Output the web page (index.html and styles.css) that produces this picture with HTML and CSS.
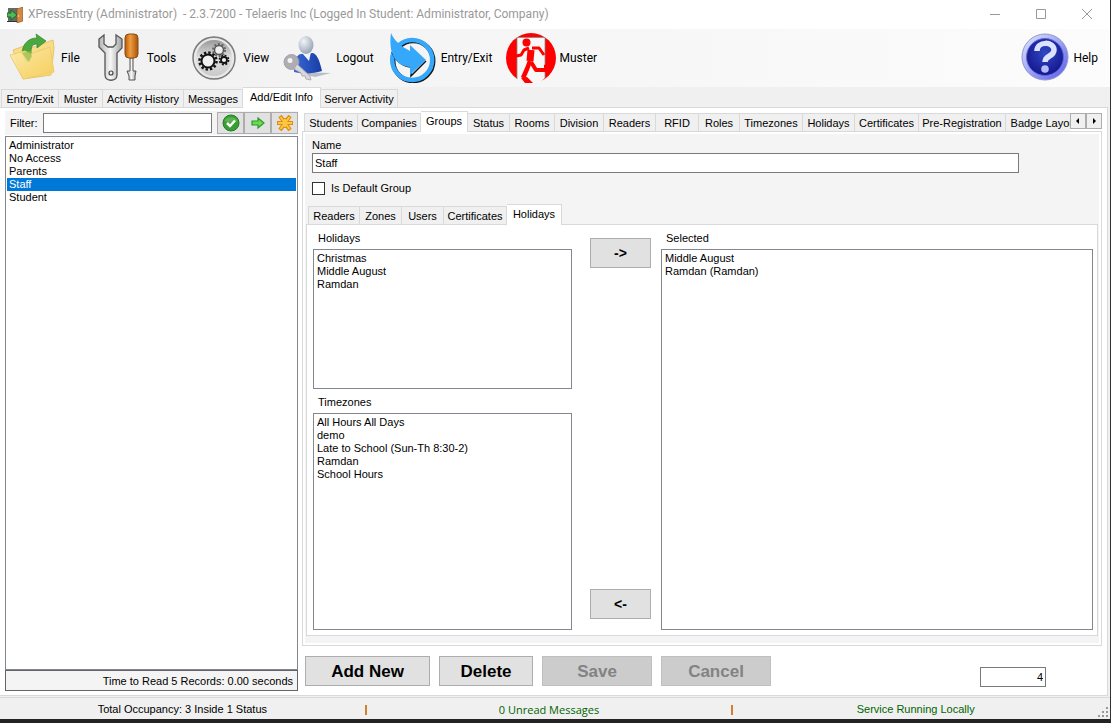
FILE: index.html
```html
<!DOCTYPE html>
<html lang="en">
<head>
    <meta charset="UTF-8">
    <meta name="viewport" content="width=device-width, initial-scale=1.0">
    <title>XPressEntry (Administrator)</title>
    <link rel="stylesheet" href="styles.css">
</head>
<body>

    <div class="window">

        <header class="title-bar">
            <svg class="app-icon" viewBox="0 0 16 16">
                <rect x="1" y="1" width="10" height="13" fill="#6a6a62"/>
                <path d="M0 6h4V3l6 5-6 5v-3H0z" fill="#4cbc58" stroke="#1c6a2c"/>
                <path d="M10 2l6-2v14l-6 2z" fill="#d08a48" stroke="#8a4a1c" stroke-width=".6"/>
                <path d="M0 14.500h10" stroke="#333"/>
                <circle cx="11.500" cy="9" r=".8" fill="#ffe28a"/>
            </svg>
            <h1 class="window-title">XPressEntry (Administrator) &nbsp;- 2.3.7200 - Telaeris Inc (Logged In Student: Administrator, Company)</h1>
            <div class="window-controls">
                <button class="control-btn" aria-label="Minimize">
                    <svg viewBox="0 0 12 12"><path d="M1 5.500h10"/></svg>
                </button>
                <button class="control-btn" aria-label="Maximize">
                    <svg viewBox="0 0 12 12"><path d="M1.500 .5h9v9h-9z"/></svg>
                </button>
                <button class="control-btn" aria-label="Close">
                    <svg viewBox="0 0 12 12"><path d="M1 0l10 10M11 0L1 10"/></svg>
                </button>
            </div>
        </header>

        <nav class="toolbar">
            <button class="tool-btn">
                <svg class="tool-icon" viewBox="0 0 50 50">
                    <defs>
                        <linearGradient id="folder" x1="0" y1="0" x2="1" y2="1">
                            <stop offset="0" stop-color="#fdeeb0"/>
                            <stop offset="1" stop-color="#f5ca52"/>
                        </linearGradient>
                    </defs>
                    <path d="M5 17l14-5 4 3 22-8 1 8-3 27-28 4z" fill="#f8dc86" stroke="#e6c468"/>
                    <path d="M14 20C15 9 22 5 29 5l-1-4 10 7-9 7v-4c-5 0-6 3-6 9l-4 9z" fill="#4aa83c" stroke="#2f8030" stroke-width=".7"/>
                    <path d="M2 22l15-4 5 3 20-7 4 25-31 7z" fill="url(#folder)" fill-opacity=".86" stroke="#efcd6c"/>
                    <path d="M14 20l8-2 2-1c-1 4 0 6 0 6l-3 6z" fill="#94ba48" opacity=".65"/>
                </svg>
                <span>File</span>
            </button>
            <button class="tool-btn">
                <svg class="tool-icon" viewBox="0 0 50 50">
                    <defs>
                        <linearGradient id="steel">
                            <stop offset="0" stop-color="#b4b4b4"/>
                            <stop offset=".5" stop-color="#f6f6f6"/>
                            <stop offset="1" stop-color="#a2a2a2"/>
                        </linearGradient>
                        <linearGradient id="handle">
                            <stop offset="0" stop-color="#b45a0c"/>
                            <stop offset=".4" stop-color="#f09c3e"/>
                            <stop offset="1" stop-color="#a8540c"/>
                        </linearGradient>
                    </defs>
                    <path d="M10 2L5 6v8l6 6v22c0 7 12 7 12 0V20l5-5V6l-6-4v9l-3 3h-5l-4-3z" fill="url(#steel)" stroke="#555" stroke-width="1.300"/>
                    <circle cx="17" cy="40" r="2" fill="#eee" stroke="#444" stroke-width="1.200"/>
                    <path d="M36 25h3v13h3l-1 5v4h-6v-4l-2-5h3z" fill="url(#steel)" stroke="#555"/>
                    <path d="M31 5q0-4 4-4h5q4 0 4 4v16q0 4-4 4h-5q-4 0-4-4z" fill="url(#handle)" stroke="#8a4a12"/>
                </svg>
                <span>Tools</span>
            </button>
            <button class="tool-btn">
                <svg class="tool-icon" viewBox="0 0 50 50">
                    <defs>
                        <linearGradient id="disc" x1="0" y1="0" x2="0" y2="1">
                            <stop offset="0" stop-color="#8c8c8c"/>
                            <stop offset=".5" stop-color="#e2e2e2"/>
                            <stop offset="1" stop-color="#c4c4c4"/>
                        </linearGradient>
                    </defs>
                    <circle cx="24" cy="25" r="21" fill="url(#disc)" stroke="#7c7c7c" stroke-width="1.500"/>
                    <circle cx="24" cy="25" r="19" fill="none" stroke="#e9e9e9" stroke-width="2"/>
                    <circle cx="18" cy="28" r="8.500" fill="none" stroke="#111" stroke-width="2.500" stroke-dasharray="2.400 2.050"/>
                    <circle cx="18" cy="28" r="6.500" fill="#f1f1f1" stroke="#111" stroke-width="2"/>
                    <circle cx="29" cy="17" r="6" fill="none" stroke="#666" stroke-width="2" stroke-dasharray="2 1.770"/>
                    <circle cx="29" cy="17" r="4.500" fill="#eee" stroke="#555" stroke-width="1.500"/>
                    <circle cx="34" cy="27" r="4.600" fill="none" stroke="#111" stroke-width="1.600" stroke-dasharray="2 1.610"/>
                    <circle cx="34" cy="27" r="3" fill="#eee" stroke="#111" stroke-width="1.800"/>
                </svg>
                <span>View</span>
            </button>
            <button class="tool-btn">
                <svg class="tool-icon" viewBox="0 0 50 50">
                    <defs>
                        <radialGradient id="head" cx=".35" cy=".3" r=".8">
                            <stop offset="0" stop-color="#f2f5f9"/>
                            <stop offset="1" stop-color="#8f9cad"/>
                        </radialGradient>
                        <linearGradient id="coat">
                            <stop offset="0" stop-color="#3868d4"/>
                            <stop offset="1" stop-color="#173ca6"/>
                        </linearGradient>
                    </defs>
                    <path d="M12 39l36 1-16 4z" fill="#b9bdc6"/>
                    <path d="M11 37c0-9 2-15 7-16l12-1c5 2 7 10 9 18-9 3-20 3-28 1z" fill="url(#coat)"/>
                    <path d="M19 20l9-1-2 9z" fill="#f1f4fa"/>
                    <ellipse cx="23" cy="12" rx="7.500" ry="9" fill="url(#head)"/>
                    <circle cx="8.500" cy="29" r="7.500" fill="#adadb3" stroke="#98989e" stroke-width=".8"/>
                    <circle cx="7" cy="27.500" r="2.500" fill="#f4f4f4"/>
                    <path d="M14 31l13 12 1 4-5-1-1-3-3 0-1-3-7-4z" fill="#d8d8dc" stroke="#a2a2a8" stroke-width=".8"/>
                </svg>
                <span>Logout</span>
            </button>
            <button class="tool-btn">
                <svg class="tool-icon" viewBox="0 0 50 50">
                    <circle cx="25.200" cy="28" r="20" fill="none" stroke="#111" stroke-width="4.500"/>
                    <circle cx="24.200" cy="27" r="20" fill="none" stroke="#35a8fb" stroke-width="4.500"/>
                    <path d="M4 19c3 8 10 14 19 15v9l15-15" fill="none" stroke="#111" stroke-width="1.500"/>
                    <path d="M3 0c3 7 8 11 12 14l7 4v-6l16 15-16 15v-8C8 33 0 21 3 0z" fill="#35a8fb"/>
                </svg>
                <span>Entry/Exit</span>
            </button>
            <button class="tool-btn">
                <svg class="tool-icon" viewBox="0 0 50 50">
                    <circle cx="25" cy="25" r="25" fill="#f00"/>
                    <path d="M11 4.500h28V45l-6 5H15l-4-4z" fill="#f7f7f7"/>
                    <path d="M11 4.500h28V45M11 4.500V46" fill="none" stroke="#888" stroke-width=".8"/>
                    <circle cx="20.500" cy="9.500" r="4" fill="#f00"/>
                    <g fill="none" stroke="#f00" stroke-linejoin="round">
                        <path d="M25 17l-1 11" stroke-width="7"/>
                        <path d="M23 15l-5 2-3 5-5 1M26 15h7l5 7" stroke-width="3"/>
                        <path d="M25 29l5 8h12" stroke-width="4"/>
                        <path d="M24 28l-3 8-4 9" stroke-width="4.500"/>
                    </g>
                    <path d="M38 32l3-1 2 7h-5z" fill="#f00"/>
                    <path d="M15 45l6-1 6 6h-8z" fill="#f00"/>
                </svg>
                <span>Muster</span>
            </button>
            <button class="tool-btn help-btn">
                <svg class="tool-icon" viewBox="0 0 50 50">
                    <defs>
                        <linearGradient id="ring" x1="0" y1="0" x2="1" y2="1">
                            <stop offset="0" stop-color="#e4ebff"/>
                            <stop offset="1" stop-color="#5658ee"/>
                        </linearGradient>
                        <radialGradient id="ball" cx=".5" cy=".4" r=".6">
                            <stop offset="0" stop-color="#3048c4"/>
                            <stop offset="1" stop-color="#15168c"/>
                        </radialGradient>
                    </defs>
                    <circle cx="25" cy="24" r="23" fill="url(#ring)" stroke="#9098c8"/>
                    <circle cx="25" cy="24" r="18.500" fill="url(#ball)" stroke="#5a6ad8"/>
                    <path d="M17 18c0-10 17-10 17-1 0 7-9 5-9 12" fill="none" stroke="#dbe2ff" stroke-width="5.500"/>
                    <circle cx="25" cy="36" r="3.800" fill="#b4bcfa"/>
                </svg>
                <span>Help</span>
            </button>
        </nav>

        <div class="tabs main-tabs" role="tablist">
            <button class="tab" role="tab">Entry/Exit</button>
            <button class="tab" role="tab">Muster</button>
            <button class="tab" role="tab">Activity History</button>
            <button class="tab" role="tab">Messages</button>
            <button class="tab active" role="tab" aria-selected="true">Add/Edit Info</button>
            <button class="tab" role="tab">Server Activity</button>
        </div>

        <main class="workspace">

            <aside class="sidebar">
                <div class="filter-row">
                    <label for="filter">Filter:</label>
                    <input type="text" id="filter" class="text-box">
                    <div class="filter-buttons">
                        <button class="icon-btn" aria-label="Apply filter">
                            <svg viewBox="0 0 18 18">
                                <circle cx="9" cy="9" r="8" fill="#38a032" stroke="#267a28"/>
                                <path d="M2.500 7a7 6 0 0 1 13 0q-6 3-13 0z" fill="#7cc870" opacity=".5"/>
                                <path d="M5 9l3 3L13 6.500" fill="none" stroke="#fff" stroke-width="2.500"/>
                            </svg>
                        </button>
                        <button class="icon-btn" aria-label="Next">
                            <svg viewBox="0 0 18 18">
                                <path d="M3 7h6V4l6 5-6 5v-3H3z" fill="#6cdc4c" stroke="#299a2b" stroke-width="1.200"/>
                            </svg>
                        </button>
                        <button class="icon-btn" aria-label="Clear filter">
                            <svg viewBox="0 0 18 18">
                                <path d="M9 4v10M1 9h16M4 2l10 14M14 2L4 16" fill="none" stroke="#dc8c14" stroke-width="4"/>
                                <path d="M9 5v8M2 9h14M4.500 3l9 12M13.500 3l-9 12" fill="none" stroke="#ffc83c" stroke-width="2"/>
                            </svg>
                        </button>
                    </div>
                </div>
                <select class="list-box group-list" size="5" aria-label="Groups">
                    <option>Administrator</option>
                    <option>No Access</option>
                    <option>Parents</option>
                    <option selected>Staff</option>
                    <option>Student</option>
                </select>
                <div class="read-time">Time to Read 5 Records: 0.00 seconds</div>
            </aside>

            <section class="details">
                <div class="tabs-row">
                    <div class="tabs info-tabs" role="tablist">
                        <button class="tab" role="tab">Students</button>
                        <button class="tab" role="tab">Companies</button>
                        <button class="tab active" role="tab" aria-selected="true">Groups</button>
                        <button class="tab" role="tab">Status</button>
                        <button class="tab" role="tab">Rooms</button>
                        <button class="tab" role="tab">Division</button>
                        <button class="tab" role="tab">Readers</button>
                        <button class="tab" role="tab">RFID</button>
                        <button class="tab" role="tab">Roles</button>
                        <button class="tab" role="tab">Timezones</button>
                        <button class="tab" role="tab">Holidays</button>
                        <button class="tab" role="tab">Certificates</button>
                        <button class="tab" role="tab">Pre-Registration</button>
                        <button class="tab" role="tab">Badge Layout</button>
                    </div>
                    <div class="tab-scroll">
                        <button class="scroll-btn" aria-label="Scroll left"><svg viewBox="0 0 8 8"><path d="M5 1v6L2 4z"/></svg></button>
                        <button class="scroll-btn" aria-label="Scroll right"><svg viewBox="0 0 8 8"><path d="M3 1v6l3-3z"/></svg></button>
                    </div>
                </div>

                <div class="group-page">
                    <div class="group-fields">
                        <label for="group-name">Name</label>
                        <input type="text" id="group-name" class="text-box name-box" value="Staff">
                        <div class="check-row">
                            <input type="checkbox" id="default-group" class="check-box">
                            <label for="default-group">Is Default Group</label>
                        </div>
                    </div>

                    <div class="tabs group-tabs" role="tablist">
                        <button class="tab" role="tab">Readers</button>
                        <button class="tab" role="tab">Zones</button>
                        <button class="tab" role="tab">Users</button>
                        <button class="tab" role="tab">Certificates</button>
                        <button class="tab active" role="tab" aria-selected="true">Holidays</button>
                    </div>

                    <div class="holiday-page">
                        <div class="source-lists">
                            <label for="holidays">Holidays</label>
                            <select class="list-box holiday-list" id="holidays" size="3">
                                <option>Christmas</option>
                                <option>Middle August</option>
                                <option>Ramdan</option>
                            </select>
                            <label for="timezones">Timezones</label>
                            <select class="list-box timezone-list" id="timezones" size="5">
                                <option>All Hours All Days</option>
                                <option>demo</option>
                                <option>Late to School (Sun-Th 8:30-2)</option>
                                <option>Ramdan</option>
                                <option>School Hours</option>
                            </select>
                        </div>
                        <div class="move-buttons">
                            <button class="btn move-btn">-&gt;</button>
                            <button class="btn move-btn">&lt;-</button>
                        </div>
                        <div class="selected-list">
                            <label for="selected">Selected</label>
                            <select class="list-box" id="selected" size="2">
                                <option>Middle August</option>
                                <option>Ramdan (Ramdan)</option>
                            </select>
                        </div>
                    </div>
                </div>

                <div class="actions">
                    <button class="btn add-btn">Add New</button>
                    <button class="btn delete-btn">Delete</button>
                    <button class="btn" disabled>Save</button>
                    <button class="btn" disabled>Cancel</button>
                    <input type="text" class="text-box id-box" value="4" aria-label="Group ID">
                </div>
            </section>

        </main>

        <footer class="status-bar">
            <span class="status-cell">Total Occupancy: 3 Inside 1 Status</span>
            <span class="divider"></span>
            <span class="status-cell good unread">0 Unread Messages</span>
            <span class="divider"></span>
            <span class="status-cell good">Service Running Locally</span>
            <svg class="grip" viewBox="0 0 12 12">
                <path d="M8 0h2v2H8zM4 4h2v2H4zM8 4h2v2H8zM0 8h2v2H0zM4 8h2v2H4zM8 8h2v2H8z" fill="#999"/>
            </svg>
        </footer>

    </div>

</body>
</html>
```
FILE: styles.css
```css
* {
    margin: 0;
    padding: 0;
    box-sizing: border-box;
}

body {
    background-color: #232323;
    color: black;
    font-family: "Liberation Sans", Arial, sans-serif;
    font-size: 11px;
    line-height: 13px;
    overflow: hidden;
}

button, input, select {
    font: inherit;
    color: inherit;
    border-radius: 0;
    outline: none;
}

svg {
    display: block;
}

.window {
    height: 100vh;
    display: flex;
    flex-direction: column;
    background-color: #f0f0f0;
    border-right: 1px solid #333;
    border-bottom: 4px solid #232323;
}

/* title bar */
.title-bar {
    display: flex;
    align-items: center;
    height: 29px;
    flex-shrink: 0;
    padding-left: 7px;
    background-color: white;
}

.app-icon {
    width: 16px;
    height: 16px;
}

.window-title {
    margin-left: 5px;
    font-family: Roboto, "Open Sans", sans-serif;
    font-size: 12px;
    font-weight: normal;
    color: #999;
    white-space: nowrap;
}

.window-controls {
    display: flex;
    margin-left: auto;
}

.control-btn {
    width: 46px;
    height: 27px;
    display: flex;
    align-items: center;
    justify-content: center;
    background: none;
    border: none;
}

.control-btn svg {
    width: 12px;
    height: 12px;
    fill: none;
    stroke: #999;
}

/* toolbar */
.toolbar {
    display: flex;
    align-items: center;
    gap: 14px;
    height: 58px;
    flex-shrink: 0;
    padding: 0 12px 0 8px;
    background: linear-gradient(to right, #f0f0f0, #fcfcfc);
}

.tool-btn {
    display: flex;
    align-items: center;
    gap: 3px;
    background: none;
    border: none;
    font-family: Roboto, "Open Sans", sans-serif;
    font-size: 12px;
}

.tool-icon {
    width: 50px;
    height: 50px;
}

.help-btn {
    margin-left: auto;
}

/* tabs */
.tabs {
    display: grid;
    grid-auto-flow: column;
    justify-content: start;
    align-items: end;
    height: 20px;
    position: relative;
    z-index: 1;
}

.tab {
    height: 18px;
    padding-top: 2px;
    background-color: #f0f0f0;
    border: 1px solid #d9d9d9;
    border-left: none;
    border-bottom: none;
    white-space: nowrap;
}

.tab:first-child {
    border-left: 1px solid #d9d9d9;
}

.tab.active {
    height: 21px;
    margin-bottom: -1px;
    padding-bottom: 3px;
    background-color: white;
}

.main-tabs {
    grid-template-columns: 58px 44px 81px 59px 78px 77px;
    flex-shrink: 0;
    padding-left: 1px;
}

.info-tabs {
    flex: 1;
    min-width: 0;
    overflow-x: clip;
    grid-template-columns: 54px 63px 47px 42px 45px 49px 52px 43px 41px 63px 52px 64px 87px 78px;
}

.group-tabs {
    grid-template-columns: 52px 42px 42px 63px 55px;
    padding-left: 2px;
}

/* content */
.workspace {
    flex: 1;
    display: flex;
    gap: 4px;
    min-height: 0;
    margin-right: 2px;
    padding: 3px 5px;
    background-color: white;
    border: 1px solid #d9d9d9;
    border-left: none;
}

.sidebar {
    width: 293px;
    flex-shrink: 0;
    display: flex;
    flex-direction: column;
    padding-bottom: 1px;
}

.filter-row {
    display: flex;
    align-items: center;
    height: 24px;
    padding-left: 5px;
    background-color: #f4f4f4;
}

.filter-row label {
    width: 33px;
}

.text-box {
    height: 20px;
    padding: 0 2px;
    background-color: white;
    border: 1px solid #7a7a7a;
}

.filter-row .text-box {
    flex: 1;
    min-width: 0;
}

.filter-buttons {
    display: flex;
    margin-left: 5px;
}

.icon-btn {
    width: 27px;
    height: 22px;
    display: flex;
    align-items: center;
    justify-content: center;
    background-color: #e1e1e1;
    border: 1px solid #adadad;
}

.icon-btn svg {
    width: 18px;
    height: 18px;
}

.list-box {
    display: block;
    width: 100%;
    padding: 2px 1px;
    background-color: white;
    border: 1px solid #828790;
    overflow: hidden;
}

.list-box option {
    height: 13px;
    min-height: 13px;
    padding: 0 2px;
    line-height: 13px;
}

.list-box option:checked {
    background: #0078d7 linear-gradient(#0078d7, #0078d7);
    -webkit-text-fill-color: white;
}

.group-list {
    flex: 1;
    margin-top: 1px;
}

.read-time {
    height: 21px;
    padding: 4px 4px 0;
    background-color: #f4f4f4;
    border: 1px solid #646464;
    text-align: right;
}

.details {
    flex: 1;
    min-width: 0;
    display: flex;
    flex-direction: column;
}

.tabs-row {
    display: flex;
    padding-left: 2px;
}

.tab-scroll {
    display: flex;
    margin-top: 2px;
}

.scroll-btn {
    width: 16px;
    height: 16px;
    display: flex;
    align-items: center;
    justify-content: center;
    background-color: #f0f0f0;
    border: 1px solid #adadad;
}

.scroll-btn svg {
    width: 8px;
    height: 8px;
}

.group-page {
    flex: 1;
    display: flex;
    flex-direction: column;
    padding: 7px 3px 9px;
    background-color: #f4f4f4;
    border: 1px solid #d9d9d9;
    box-shadow: inset 0 0 0 2px white;
}

.group-fields {
    height: 65px;
    padding-left: 6px;
}

.group-fields label {
    display: block;
}

.name-box {
    display: block;
    width: 90%;
    margin-top: 1px;
}

.check-row {
    display: flex;
    align-items: center;
    gap: 6px;
    margin-top: 9px;
}

.check-box {
    appearance: none;
    width: 13px;
    height: 13px;
    background-color: white;
    border: 1px solid #333;
}

.check-box:checked {
    background-color: #333;
    box-shadow: inset 0 0 0 2px white;
}

.holiday-page {
    flex: 1;
    display: flex;
    padding: 7px 4px 5px 6px;
    background-color: white;
    border: 1px solid #d9d9d9;
}

.holiday-page label {
    display: block;
    height: 17px;
    padding-left: 5px;
}

.source-lists {
    width: 259px;
    display: flex;
    flex-direction: column;
}

.holiday-list {
    height: 140px;
    margin-bottom: 7px;
}

.timezone-list {
    flex: 1;
}

.move-buttons {
    display: flex;
    flex-direction: column;
    justify-content: space-between;
    padding: 6px 10px 11px 18px;
}

.btn {
    width: 110px;
    height: 30px;
    background-color: #e1e1e1;
    border: 1px solid #adadad;
    font-size: 17px;
    font-weight: bold;
}

.btn:disabled {
    background-color: #ccc;
    border-color: #bfbfbf;
    color: #838383;
}

.move-btn {
    width: 61px;
    font-size: 14px;
}

.selected-list {
    flex: 1;
    display: flex;
    flex-direction: column;
}

.selected-list .list-box {
    flex: 1;
}

.actions {
    display: flex;
    gap: 9px;
    padding: 10px 56px 5px 3px;
}

.add-btn {
    width: 125px;
}

.delete-btn {
    width: 94px;
}

.id-box {
    width: 66px;
    margin: 11px 0 0 auto;
    text-align: right;
}

/* status bar */
.status-bar {
    display: flex;
    align-items: center;
    height: 22px;
    flex-shrink: 0;
    margin-top: 1px;
    padding-top: 2px;
    border-top: 1px solid #d9d9d9;
}

.status-cell {
    flex: 1;
    text-align: center;
}

.good {
    color: #006400;
}

.unread {
    font-family: "Open Sans", "Noto Sans", sans-serif;
}

.divider {
    width: 2px;
    height: 10px;
    background-color: #d08030;
}

.grip {
    width: 12px;
    height: 12px;
    align-self: flex-end;
}
```
